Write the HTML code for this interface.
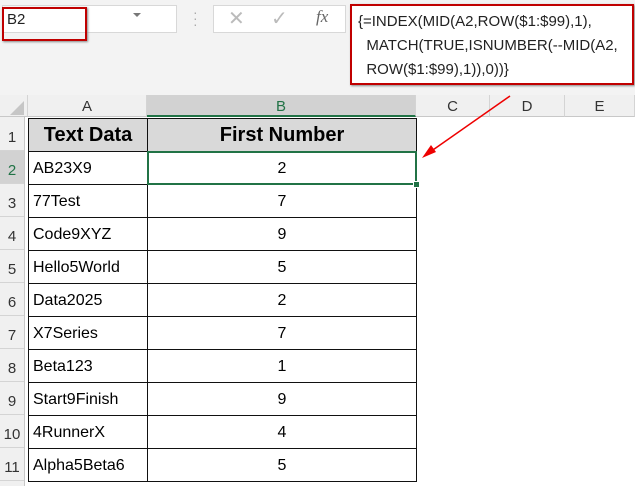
<!DOCTYPE html>
<html><head><style>
body{margin:0;width:635px;height:486px;background:#fff;position:relative;overflow:hidden;font-family:"Liberation Sans",Arial,sans-serif}
.a{position:absolute}
.top{left:0;top:0;width:635px;height:95px;background:#f3f3f3}
.ch{top:95px;height:22px;background:#f0f0f0;border-bottom:1px solid #c8c8c8;border-right:1px solid #d4d4d4;text-align:center;line-height:23px;font-size:15px;color:#333;box-sizing:border-box}
.rh{left:0;width:24px;height:33px;background:#f0f0f0;border-bottom:1px solid #d4d4d4;box-sizing:border-box;font-size:15px;color:#333;text-align:center;line-height:40px}
.c{height:34px;border:1px solid #111;box-sizing:border-box;font-size:16px;line-height:33px;color:#000}
</style></head><body>
<div class="a top"></div>
<div class="a" style="left:2px;top:5px;width:175px;height:28px;background:#fff;border:1px solid #d8d8d8;box-sizing:border-box"></div>
<div class="a" style="left:2px;top:7px;width:85px;height:34px;border:2px solid #c00000;box-sizing:border-box;box-shadow:1px 1px 2px #888"></div>
<div class="a" style="left:7px;top:11px;font-size:15px;color:#222">B2</div>
<div class="a" style="left:133px;top:13px;width:0;height:0;border-left:4px solid transparent;border-right:4px solid transparent;border-top:4px solid #777"></div>
<div class="a" style="left:193px;top:9px;color:#aaa;font-size:14px;line-height:6px">·<br>·<br>·</div>
<div class="a" style="left:213px;top:5px;width:133px;height:28px;background:#fff;border:1px solid #d8d8d8;box-sizing:border-box"></div>
<div class="a" style="left:228px;top:6px;font-size:20px;color:#bbb">✕</div>
<div class="a" style="left:271px;top:6px;font-size:20px;color:#bbb">✓</div>
<div class="a" style="left:316px;top:7px;font-size:17px;color:#666;font-style:italic;font-family:'Liberation Serif',serif">fx</div>
<div class="a" style="left:350px;top:4px;width:284px;height:81px;background:#fff;border:2px solid #c00000;box-sizing:border-box;box-shadow:1px 1px 2px #888"></div>
<div class="a" style="left:358px;top:10px;font-size:15px;line-height:24px;color:#222;white-space:pre">{=INDEX(MID(A2,ROW($1:$99),1),
  MATCH(TRUE,ISNUMBER(--MID(A2,
  ROW($1:$99),1)),0))}</div>
<div class="a ch" style="left:0;width:28px;background:#f0f0f0"></div>
<div class="a" style="left:10px;top:101px;width:0;height:0;border-left:14px solid transparent;border-bottom:14px solid #c6c6c6"></div>
<div class="a ch" style="left:28px;width:119px">A</div>
<div class="a ch" style="left:147px;width:269px;background:#d2d2d2;color:#217346;border-bottom:2px solid #217346">B</div>
<div class="a ch" style="left:416px;width:74px">C</div>
<div class="a ch" style="left:490px;width:75px">D</div>
<div class="a ch" style="left:565px;width:70px">E</div>
<div class="a" style="left:0;top:117px;width:24px;height:369px;background:#f0f0f0;border-right:1px solid #c8c8c8"></div>
<div id="g"></div>
<script>
var d=[["AB23X9",2],["77Test",7],["Code9XYZ",9],["Hello5World",5],["Data2025",2],["X7Series",7],["Beta123",1],["Start9Finish",9],["4RunnerX",4],["Alpha5Beta6",5]];
var h="";
for(var i=0;i<11;i++){var y=118+i*33;
h+='<div class="a rh" style="top:'+y+'px;'+(i==1?'background:#d2d2d2;color:#217346;':'')+'">'+(i+1)+'</div>';}
h+='<div class="a c" style="left:28px;top:118px;width:120px;background:#d9d9d9;font-weight:bold;font-size:20px;text-align:center;line-height:33px">Text Data</div>';
h+='<div class="a c" style="left:147px;top:118px;width:270px;background:#d9d9d9;font-weight:bold;font-size:20px;text-align:center;line-height:33px">First Number</div>';
for(var i=0;i<10;i++){var y=151+i*33;
h+='<div class="a c" style="left:28px;top:'+y+'px;width:120px;padding-left:4px">'+d[i][0]+'</div>';
h+='<div class="a c" style="left:147px;top:'+y+'px;width:270px;text-align:center">'+d[i][1]+'</div>';}
document.getElementById("g").innerHTML=h;
</script>
<div class="a" style="left:147px;top:151px;width:270px;height:34px;border:2px solid #217346;box-sizing:border-box"></div>
<div class="a" style="left:413px;top:181px;width:5px;height:5px;background:#217346;border:1px solid #fff"></div>
<svg class="a" style="left:0;top:0" width="635" height="486"><line x1="510" y1="96" x2="430" y2="152" stroke="#e00" stroke-width="1.5"/><polygon points="422,158 436,152 431,145" fill="#e00"/></svg>
</body></html>
